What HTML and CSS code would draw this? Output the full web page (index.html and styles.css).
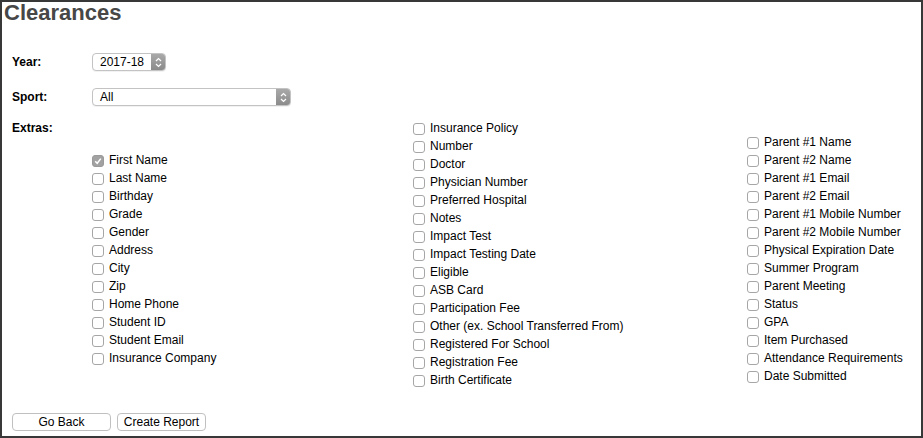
FILE: index.html
```html
<!DOCTYPE html>
<html>
<head>
<meta charset="utf-8">
<link rel="stylesheet" href="styles.css">
</head>
<body>
<div class="page">
  <h1 class="title">Clearances</h1>
  <div class="form">
    <div class="row row-year">
      <div class="label">Year:</div>
      <div class="select select-year"><span class="value">2017-18</span><span class="arrow"><svg width="7" height="11" viewBox="0 0 7 11"><path d="M1 4 L3.5 1.5 L6 4 M1 7 L3.5 9.5 L6 7" fill="none" stroke="#fff" stroke-width="1.2"/></svg></span></div>
    </div>
    <div class="row row-sport">
      <div class="label">Sport:</div>
      <div class="select select-sport"><span class="value">All</span><span class="arrow"><svg width="7" height="11" viewBox="0 0 7 11"><path d="M1 4 L3.5 1.5 L6 4 M1 7 L3.5 9.5 L6 7" fill="none" stroke="#fff" stroke-width="1.2"/></svg></span></div>
    </div>
    <div class="row row-extras">
      <div class="label">Extras:</div>
      <div class="cols">
        <div class="col col1">
          <div class="cb"><span class="box checked"><svg width="10" height="10" viewBox="0 0 10 10"><path d="M2.2 5.2 L4.2 7.3 L7.8 2.6" fill="none" stroke="#fff" stroke-width="1.5"/></svg></span>First Name</div>
          <div class="cb"><span class="box"></span>Last Name</div>
          <div class="cb"><span class="box"></span>Birthday</div>
          <div class="cb"><span class="box"></span>Grade</div>
          <div class="cb"><span class="box"></span>Gender</div>
          <div class="cb"><span class="box"></span>Address</div>
          <div class="cb"><span class="box"></span>City</div>
          <div class="cb"><span class="box"></span>Zip</div>
          <div class="cb"><span class="box"></span>Home Phone</div>
          <div class="cb"><span class="box"></span>Student ID</div>
          <div class="cb"><span class="box"></span>Student Email</div>
          <div class="cb"><span class="box"></span>Insurance Company</div>
        </div>
        <div class="col col2">
          <div class="cb"><span class="box"></span>Insurance Policy</div>
          <div class="cb"><span class="box"></span>Number</div>
          <div class="cb"><span class="box"></span>Doctor</div>
          <div class="cb"><span class="box"></span>Physician Number</div>
          <div class="cb"><span class="box"></span>Preferred Hospital</div>
          <div class="cb"><span class="box"></span>Notes</div>
          <div class="cb"><span class="box"></span>Impact Test</div>
          <div class="cb"><span class="box"></span>Impact Testing Date</div>
          <div class="cb"><span class="box"></span>Eligible</div>
          <div class="cb"><span class="box"></span>ASB Card</div>
          <div class="cb"><span class="box"></span>Participation Fee</div>
          <div class="cb"><span class="box"></span>Other (ex. School Transferred From)</div>
          <div class="cb"><span class="box"></span>Registered For School</div>
          <div class="cb"><span class="box"></span>Registration Fee</div>
          <div class="cb"><span class="box"></span>Birth Certificate</div>
        </div>
        <div class="col col3">
          <div class="cb"><span class="box"></span>Parent #1 Name</div>
          <div class="cb"><span class="box"></span>Parent #2 Name</div>
          <div class="cb"><span class="box"></span>Parent #1 Email</div>
          <div class="cb"><span class="box"></span>Parent #2 Email</div>
          <div class="cb"><span class="box"></span>Parent #1 Mobile Number</div>
          <div class="cb"><span class="box"></span>Parent #2 Mobile Number</div>
          <div class="cb"><span class="box"></span>Physical Expiration Date</div>
          <div class="cb"><span class="box"></span>Summer Program</div>
          <div class="cb"><span class="box"></span>Parent Meeting</div>
          <div class="cb"><span class="box"></span>Status</div>
          <div class="cb"><span class="box"></span>GPA</div>
          <div class="cb"><span class="box"></span>Item Purchased</div>
          <div class="cb"><span class="box"></span>Attendance Requirements</div>
          <div class="cb"><span class="box"></span>Date Submitted</div>
        </div>
      </div>
    </div>
    <div class="buttons">
      <button class="btn btn-back">Go Back</button>
      <button class="btn btn-report">Create Report</button>
    </div>
  </div>
</div>
</body>
</html>
```

FILE: styles.css
```css
html, body {
  margin: 0;
  padding: 0;
  background: #fff;
}
body {
  font-family: "Liberation Sans", Arial, Helvetica, sans-serif;
  font-size: 12px;
  color: #000;
}
.page {
  box-sizing: border-box;
  width: 923px;
  height: 438px;
  border: 2px solid #383838;
  overflow: hidden;
}
.title {
  margin: 0;
  padding-left: 2px;
  font-size: 22px;
  line-height: 22px;
  font-weight: bold;
  color: #474747;
}
.form {
  padding-left: 10px;
}
.row {
  display: flex;
}
.row-year {
  margin-top: 29px;
  align-items: center;
}
.row-sport {
  margin-top: 17px;
  align-items: center;
}
.row-extras {
  margin-top: 13px;
  align-items: flex-start;
}
.label {
  width: 80px;
  flex: none;
  font-weight: bold;
  line-height: 18px;
}
.select {
  box-sizing: border-box;
  height: 18px;
  display: flex;
  border: 1px solid #c3c3c3;
  border-radius: 4px;
  background: #fff;
  overflow: hidden;
  box-shadow: 0 1px 0 rgba(0,0,0,0.05);
}
.select-year {
  width: 74px;
}
.select-sport {
  width: 199px;
}
.select .value {
  flex: 1;
  padding-left: 7px;
  line-height: 16px;
}
.select .arrow {
  width: 14px;
  flex: none;
  display: flex;
  align-items: center;
  justify-content: center;
  background: linear-gradient(#a9a9a9, #8b8b8b);
}
.cols {
  display: flex;
  align-items: flex-start;
}
.col1 {
  width: 321px;
  padding-top: 32px;
}
.col2 {
  width: 334px;
}
.col3 {
  padding-top: 14px;
}
.cb {
  display: flex;
  align-items: flex-start;
  height: 18px;
  line-height: 18px;
  white-space: nowrap;
}
.box {
  box-sizing: border-box;
  width: 12px;
  height: 12px;
  margin-top: 4px;
  margin-right: 5px;
  border: 1px solid #a6a6a6;
  border-radius: 3px;
  background: #fff;
  flex: none;
  display: flex;
  align-items: center;
  justify-content: center;
}
.box.checked {
  background: #a2a2a2;
  border-color: #9a9a9a;
}
.buttons {
  display: flex;
  gap: 6px;
  margin-top: 24px;
}
.btn {
  box-sizing: border-box;
  height: 18px;
  padding: 0;
  font-family: "Liberation Sans", Arial, Helvetica, sans-serif;
  font-size: 12px;
  line-height: 16px;
  color: #000;
  background: #fff;
  border: 1px solid #c0c0c0;
  border-radius: 4px;
}
.btn-back {
  width: 99px;
}
.btn-report {
  width: 89px;
}
```
